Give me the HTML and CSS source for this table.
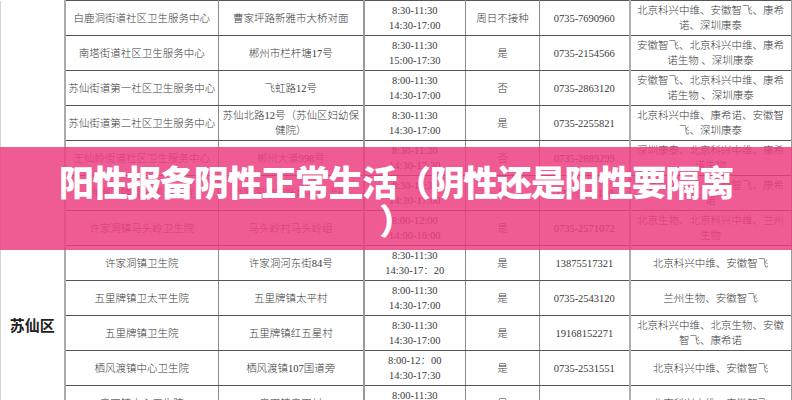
FILE: index.html
```html
<!DOCTYPE html>
<html lang="zh-CN">
<head>
<meta charset="utf-8">
<title>阳性报备阴性正常生活</title>
<link rel="stylesheet" href="styles.css">
</head>
<body>
<div class="page">
  <table class="sites">
    <colgroup>
      <col class="c-district"><col class="c-name"><col class="c-addr"><col class="c-time"><col class="c-appt"><col class="c-phone"><col class="c-vac">
    </colgroup>
    <tbody>
      <tr>
        <td class="district" rowspan="12"><span>苏仙区</span></td>
        <td class="name">白鹿洞街道社区卫生服务中心</td>
        <td class="addr">曹家坪路新雅市大桥对面</td>
        <td class="time">8:30-11:30<br>14:30-17:00</td>
        <td class="appt">周日不接种</td>
        <td class="phone">0735-7690960</td>
        <td class="vac">北京科兴中维、安徽智飞、康希诺、深圳康泰</td>
      </tr>
      <tr>
        <td class="name">南塔街道社区卫生服务中心</td>
        <td class="addr">郴州市栏杆塘17号</td>
        <td class="time">8:30-11:30<br>15:00-17:30</td>
        <td class="appt">是</td>
        <td class="phone">0735-2154566</td>
        <td class="vac">安徽智飞、北京科兴中维、康希诺生物 、深圳康泰</td>
      </tr>
      <tr>
        <td class="name">苏仙街道第一社区卫生服务中心</td>
        <td class="addr">飞虹路12号</td>
        <td class="time">8:00-11:30<br>14:30-17:00</td>
        <td class="appt">否</td>
        <td class="phone">0735-2863120</td>
        <td class="vac">安徽智飞、北京科兴中维、康希诺生物 、深圳康泰</td>
      </tr>
      <tr>
        <td class="name">苏仙街道第二社区卫生服务中心</td>
        <td class="addr">苏仙北路12号（苏仙区妇幼保健院）</td>
        <td class="time">8:30-11:30<br>14:30-17:00</td>
        <td class="appt">是</td>
        <td class="phone">0735-2255821</td>
        <td class="vac">北京科兴中维、康希诺、安徽智飞、深圳康泰</td>
      </tr>
      <tr>
        <td class="name">王仙岭街道社区卫生服务中心</td>
        <td class="addr">郴州大道998号</td>
        <td class="time">8:30-11:30<br>14:30-17:30</td>
        <td class="appt">否</td>
        <td class="phone">0735-2889299</td>
        <td class="vac">深圳康泰、北京科兴中维、康希诺生物</td>
      </tr>
      <tr>
        <td class="name">许家洞镇荷叶坪卫生院</td>
        <td class="addr">许家洞镇荷叶坪村坪上组</td>
        <td class="time">8:30-11:30<br>14:30-17:00</td>
        <td class="appt">是</td>
        <td class="phone">17375466120</td>
        <td class="vac">北京科兴中维、安徽智飞、康希诺</td>
      </tr>
      <tr>
        <td class="name">许家洞镇马头岭卫生院</td>
        <td class="addr">马头岭村马头岭组</td>
        <td class="time">8:00-12:00<br>14:00-16:00</td>
        <td class="appt">是</td>
        <td class="phone">0735-2571072</td>
        <td class="vac">北京生物、北京科兴中维、兰州生物</td>
      </tr>
      <tr>
        <td class="name">许家洞镇卫生院</td>
        <td class="addr">许家洞河东街84号</td>
        <td class="time">8:30-11:30<br>14:30-17：20</td>
        <td class="appt">是</td>
        <td class="phone">13875517321</td>
        <td class="vac">北京科兴中维、安徽智飞</td>
      </tr>
      <tr>
        <td class="name">五里牌镇卫太平生院</td>
        <td class="addr">五里牌镇太平村</td>
        <td class="time">8:00-11:30<br>14:30-17:00</td>
        <td class="appt">是</td>
        <td class="phone">0735-2543120</td>
        <td class="vac">兰州生物、安徽智飞</td>
      </tr>
      <tr>
        <td class="name">五里牌镇卫生院</td>
        <td class="addr">五里牌镇红五星村</td>
        <td class="time">8:30-11:30<br>14:30-17:00</td>
        <td class="appt">是</td>
        <td class="phone">19168152271</td>
        <td class="vac">北京科兴中维、北京生物、安徽智飞、康希诺</td>
      </tr>
      <tr>
        <td class="name">栖风渡镇中心卫生院</td>
        <td class="addr">栖风渡镇107国道旁</td>
        <td class="time">8:00-12：00<br>14:30-17:30</td>
        <td class="appt">是</td>
        <td class="phone">0735-2531551</td>
        <td class="vac">北京科兴中维、安徽智飞</td>
      </tr>
      <tr>
        <td class="name">良田镇中心卫生院</td>
        <td class="addr">良田镇良田村</td>
        <td class="time">8:00-11:30<br>14:30-17:00</td>
        <td class="appt">是</td>
        <td class="phone">0735-2780120</td>
        <td class="vac">北京科兴中维、安徽智飞</td>
      </tr>
    </tbody>
  </table>
  <div class="banner">
    <h1 class="banner-title">阳性报备阴性正常生活（阴性还是阳性要隔离）</h1>
  </div>
</div>
</body>
</html>
```

FILE: styles.css
```css
html, body {
  margin: 0;
  padding: 0;
  background: #ffffff;
}

.page {
  position: relative;
  width: 792px;
  height: 400px;
  overflow: hidden;
  background: #ffffff;
}

.sites {
  border-collapse: collapse;
  table-layout: fixed;
  width: 791px;
  margin-left: 0;
  font-family: "Liberation Serif", "Noto Sans CJK SC", serif;
  font-size: 10.5px;
  font-weight: 300;
  color: #3a3a3a;
}

.c-district { width: 64px; }
.c-name { width: 154px; }
.c-addr { width: 145px; }
.c-time { width: 102px; }
.c-appt { width: 74px; }
.c-phone { width: 90px; }
.c-vac { width: 162px; }

.sites td {
  height: 35px;
  padding: 0 5px;
  text-align: center;
  vertical-align: middle;
  line-height: 15px;
  border-top: 1px solid #555555;
  border-bottom: 1px solid #555555;
  border-right: 1px solid #8a8a8a;
  box-sizing: border-box;
}

.sites td.name {
  padding: 0 1px;
  white-space: nowrap;
}

.sites td.addr {
  padding: 0 3px;
  border-right: 2px solid #9a9a9a;
}

.sites td.phone {
  border-right: 2px solid #b0b0b0;
}

.sites td.vac {
  padding: 0 6px;
  border-right: 2px solid #9a9a9a;
}

.sites td.district {
  vertical-align: top;
  padding: 316px 0 0 0;
  border-left: 1px solid #d4d4d4;
  border-right: 2px solid #ababab;
  border-top: none;
  border-bottom: none;
  font-family: "Noto Sans CJK SC", sans-serif;
  font-size: 15px;
  font-weight: 700;
  color: #222222;
}

.banner {
  position: absolute;
  left: 0;
  top: 147px;
  width: 792px;
  height: 103px;
  background: rgba(236, 62, 128, 0.85);
  box-sizing: border-box;
  padding: 15px 51px 0;
}

.banner-title {
  margin: 0;
  font-family: "Noto Sans CJK SC", sans-serif;
  font-weight: 900;
  font-size: 35px;
  line-height: 38px;
  letter-spacing: -1.3px;
  color: #ffffff;
  text-align: center;
  text-spacing-trim: space-all;
  line-break: anywhere;
}
```
